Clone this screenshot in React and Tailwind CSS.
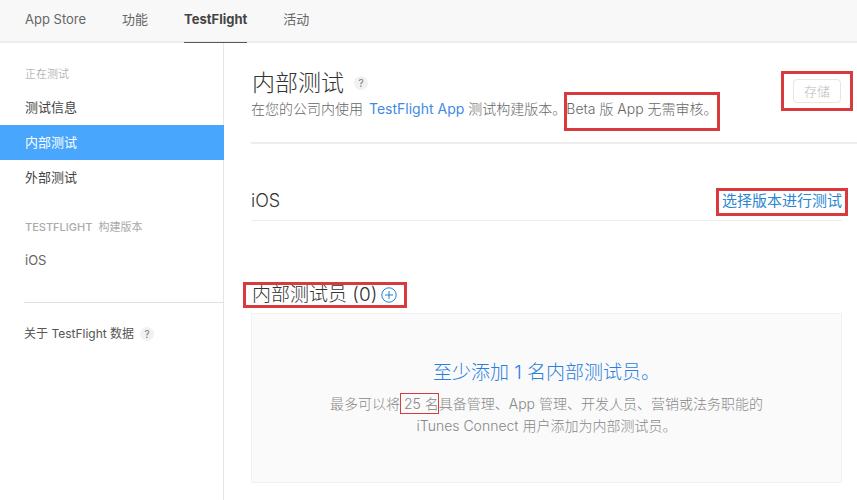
import React from 'react';

const NAV_ITEMS = [
  { id: 'store', label: 'App Store' },
  { id: 'features', label: '功能' },
  { id: 'testflight', label: 'TestFlight', active: true },
  { id: 'activity', label: '活动' },
];

const TESTING_ITEMS = [
  { id: 'info', label: '测试信息' },
  { id: 'internal', label: '内部测试', active: true },
  { id: 'external', label: '外部测试' },
];

// Red frame drawn around the part it wraps, without moving it
function Marked({ frame, className = '', children }) {
  return (
    <span className={`relative ${className}`}>
      {children}
      <span className={`pointer-events-none absolute border-[#d93a3e] ${frame}`} />
    </span>
  );
}

function HelpButton() {
  return (
    <button
      type="button"
      aria-label="帮助"
      className="flex h-3.5 w-3.5 items-center justify-center rounded-full bg-[#f1f1f1] text-[10px] leading-none text-[#777]"
    >
      ?
    </button>
  );
}

function TopNav() {
  return (
    <header className="h-[43px] border-b-2 border-[#ededed] bg-[#f8f8f8] px-[25px]">
      <nav className="flex h-[43px] gap-9 text-[13px]">
        {NAV_ITEMS.map((item) => (
          <a
            key={item.id}
            href={`#${item.id}`}
            className={
              item.active
                ? 'flex items-center border-b border-[#555] pb-0.5 font-bold text-[#444]'
                : 'flex items-center border-b border-transparent pb-0.5 text-[#666]'
            }
          >
            {item.label}
          </a>
        ))}
      </nav>
    </header>
  );
}

function Sidebar() {
  return (
    <aside className="w-56 shrink-0 border-r border-[#e6e6e6]">
      <h2 className="pt-[23px] pl-[25px] text-[11px] leading-4 font-light text-[#999]">正在测试</h2>
      <nav className="mt-2 text-[13px]">
        {TESTING_ITEMS.map((item) => (
          <a
            key={item.id}
            href={`#${item.id}`}
            className={
              item.active
                ? '-mr-px flex h-[35px] items-center bg-[#48a6fd] pl-[25px] text-white'
                : 'flex h-[35px] items-center pl-[25px] text-[#444]'
            }
          >
            {item.label}
          </a>
        ))}
      </nav>
      <h2 className="mt-6 flex gap-1.5 pl-[25px] text-[11px] leading-4 text-[#aaa]">
        <span className="font-medium">TESTFLIGHT</span>
        <span>构建版本</span>
      </h2>
      <a href="#ios" className="mt-2 flex h-[35px] items-center pl-[25px] text-[13px] text-[#666]">
        iOS
      </a>
      <div className="mt-6 ml-6 flex items-center gap-1.5 border-t border-[#e0e0e0] pt-[23px] text-xs leading-4 text-[#555]">
        关于 TestFlight 数据
        <HelpButton />
      </div>
    </aside>
  );
}

function PageHeading() {
  return (
    <div className="flex h-[101px] items-start justify-between border-b-2 border-[#ededed] pr-4">
      <div className="pt-6">
        <div className="flex items-center gap-2.5">
          <h1 className="pl-px text-[23px] leading-8 font-light text-[#333]">内部测试</h1>
          <HelpButton />
        </div>
        <p className="text-sm leading-5 font-light whitespace-nowrap text-[#666]">
          在您的公司内使用
          <a href="#app" className="mr-1 ml-1.5 font-normal text-[#3f8be4]">TestFlight App</a>
          测试构建版本。
          <Marked frame="-inset-x-0.5 -top-2 -bottom-3.5 border-[3px]">Beta 版 App 无需审核。</Marked>
        </p>
      </div>
      <Marked frame="-inset-x-3 -inset-y-2 border-[3px]" className="mt-9">
        <button
          type="button"
          disabled
          className="block h-6 rounded-sm border border-[#e6e6e6] px-2.5 text-[13px] leading-5 font-light text-[#bbb]"
        >
          存储
        </button>
      </Marked>
    </div>
  );
}

function BuildRow() {
  return (
    <div className="mt-[43px] mr-[15px] flex h-[34px] items-start justify-between border-b border-[#ededed]">
      <h2 className="text-lg leading-7 font-light text-[#333]">iOS</h2>
      <Marked frame="-inset-x-1.5 top-px -bottom-px border-[3px]">
        <a href="#select" className="block text-[15px] leading-7 text-[#2a86d3]">
          选择版本进行测试
        </a>
      </Marked>
    </div>
  );
}

function Testers() {
  return (
    <section className="mt-[60px] pr-[15px]">
      <Marked frame="-left-2 -right-2.5 inset-y-px border-[3px]" className="inline-flex h-7 items-center gap-1">
        <h2 className="pl-px text-[19px] leading-7 font-light text-[#333]">内部测试员 (0)</h2>
        <button type="button" aria-label="添加测试员" className="text-[#1f82d2]">
          <svg className="h-4 w-4" viewBox="0 0 16 16" fill="none" stroke="currentColor">
            <circle cx="8" cy="8" r="7.2" />
            <path d="M8 4v8M4 8h8" />
          </svg>
        </button>
      </Marked>
      <div className="mt-1 border border-[#f1f1f1] bg-[#fafafa] pt-[45px] pb-[45px] text-center">
        <a href="#add" className="text-[19px] leading-7 font-light text-[#2a80e0]">
          至少添加 1 名内部测试员。
        </a>
        <p className="mt-1.5 text-sm leading-[22px] font-light text-[#888]">
          最多可以将 <Marked frame="-left-1 right-0 -inset-y-0.5 border">25 名</Marked>
          具备管理、App 管理、开发人员、营销或法务职能的
          <br />
          iTunes Connect 用户添加为内部测试员。
        </p>
      </div>
    </section>
  );
}

function App() {
  return (
    <div className="flex min-h-screen flex-col bg-white font-['Inter','Noto_Sans_CJK_SC',sans-serif]">
      <TopNav />
      <div className="flex flex-1">
        <Sidebar />
        <main className="min-w-0 flex-1 pl-[27px]">
          <PageHeading />
          <BuildRow />
          <Testers />
        </main>
      </div>
    </div>
  );
}

export default App;
